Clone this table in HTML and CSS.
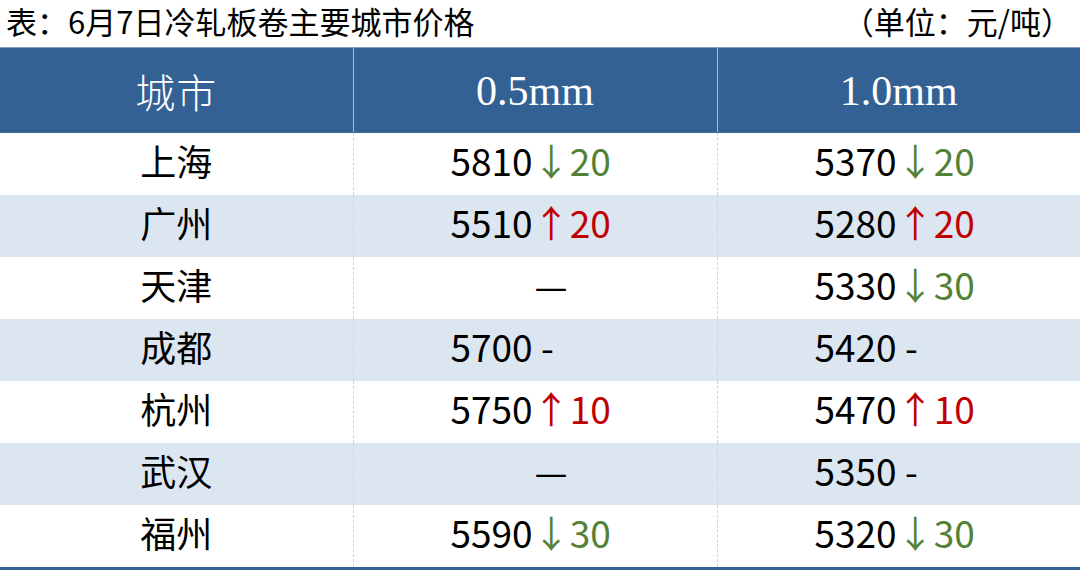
FILE: index.html
```html
<!DOCTYPE html>
<html lang="zh-CN">
<head>
<meta charset="utf-8">
<title>6月7日冷轧板卷主要城市价格</title>
<link rel="stylesheet" href="styles.css">
</head>
<body>
<div class="page">
  <div class="caption">
    <span class="caption-title">表：6月7日冷轧板卷主要城市价格</span>
    <span class="caption-unit">（单位：元/吨）</span>
  </div>
  <table class="price-table">
    <colgroup>
      <col class="col-city">
      <col class="col-a">
      <col class="col-b">
    </colgroup>
    <thead>
      <tr>
        <th class="th-city">城市</th>
        <th class="th-spec">0.5mm</th>
        <th class="th-spec">1.0mm</th>
      </tr>
    </thead>
    <tbody>
      <tr>
        <td class="city">上海</td>
        <td class="price">5810<span class="down">↓20</span></td>
        <td class="price">5370<span class="down">↓20</span></td>
      </tr>
      <tr class="alt">
        <td class="city">广州</td>
        <td class="price">5510<span class="up">↑20</span></td>
        <td class="price">5280<span class="up">↑20</span></td>
      </tr>
      <tr>
        <td class="city">天津</td>
        <td class="price"><span class="none">—</span></td>
        <td class="price">5330<span class="down">↓30</span></td>
      </tr>
      <tr class="alt">
        <td class="city">成都</td>
        <td class="price">5700 -</td>
        <td class="price">5420 -</td>
      </tr>
      <tr>
        <td class="city">杭州</td>
        <td class="price">5750<span class="up">↑10</span></td>
        <td class="price">5470<span class="up">↑10</span></td>
      </tr>
      <tr class="alt">
        <td class="city">武汉</td>
        <td class="price"><span class="none">—</span></td>
        <td class="price">5350 -</td>
      </tr>
      <tr>
        <td class="city">福州</td>
        <td class="price">5590<span class="down">↓30</span></td>
        <td class="price">5320<span class="down">↓30</span></td>
      </tr>
    </tbody>
  </table>
</div>
</body>
</html>
```

FILE: styles.css
```css
html, body {
  margin: 0;
  padding: 0;
  background: #ffffff;
}

body {
  font-family: "Noto Sans CJK SC", "Noto Sans", sans-serif;
  color: #000000;
}

.page {
  width: 1080px;
}

.caption {
  display: flex;
  justify-content: space-between;
  align-items: center;
  height: 47px;
  padding: 0 8px 0 6px;
  box-sizing: border-box;
  font-size: 31px;
  line-height: 1;
}

.caption-title,
.caption-unit {
  display: block;
  padding-bottom: 6px;
}

.price-table {
  width: 1080px;
  border-collapse: collapse;
  table-layout: fixed;
}

.col-city { width: 353px; }
.col-a { width: 364px; }
.col-b { width: 363px; }

.price-table thead tr {
  height: 85px;
  background: #336194;
}

.price-table th {
  color: #ffffff;
  font-weight: 300;
  text-align: center;
  padding: 0;
  border-top: 1px solid #7f9cc0;
  border-bottom: 1px solid #3f6b9c;
}

.price-table th + th {
  border-left: 1px solid #a9bdd6;
}

.th-city {
  font-family: "Noto Sans CJK SC", serif;
  font-size: 40px;
  letter-spacing: 1px;
  padding-top: 2px !important;
}

.th-spec {
  font-family: "Liberation Serif", "Noto Sans CJK SC", serif;
  font-size: 42px;
  font-weight: 400 !important;
  padding-top: 2px !important;
}

.price-table tbody tr {
  height: 62px;
  background: #ffffff;
}

.price-table tbody tr.alt {
  background: #dce6f1;
}

.price-table td {
  padding: 0 0 7px 0;
  font-size: 37px;
  line-height: 55px;
  white-space: nowrap;
}

.price-table td.city {
  font-size: 36px;
}

.price-table td + td {
  border-left: 1px dashed #d4d4d4;
}

.city {
  text-align: center;
}

.price {
  text-align: left;
  padding-left: 97px !important;
}

.down {
  color: #538135;
}

.up {
  color: #c00000;
}

.none {
  display: inline-block;
  margin-left: 84px;
}

.price-table tbody tr:last-child td {
  border-bottom: 3px solid #336194;
}
```
